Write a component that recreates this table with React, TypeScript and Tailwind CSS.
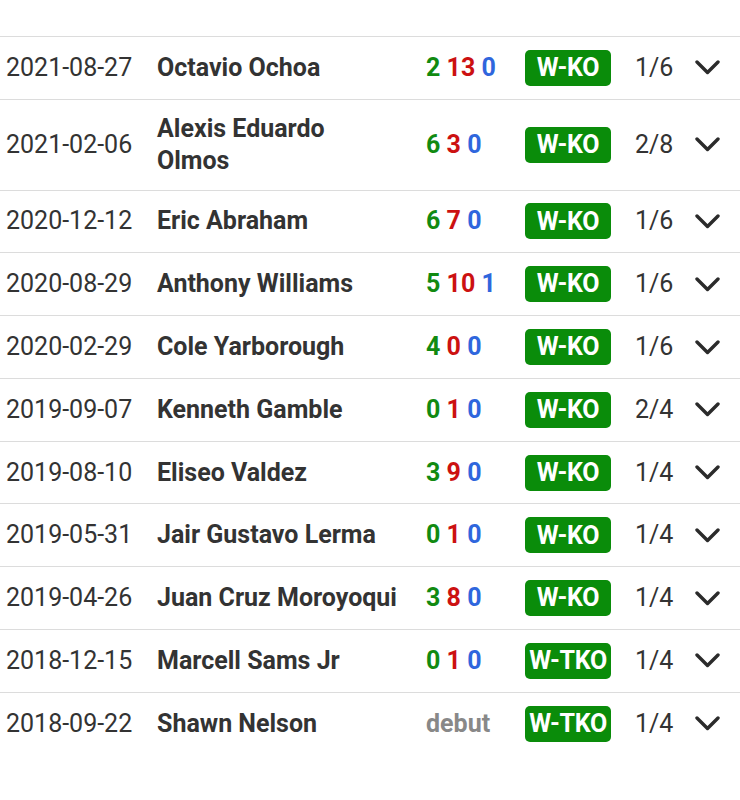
import { useState } from 'react'

type Fight = {
  date: string
  opponent: string
  record: [number, number, number] | null
  result: string
  round: string
}

const FIGHTS: Fight[] = [
  { date: '2021-08-27', opponent: 'Octavio Ochoa', record: [2, 13, 0], result: 'W-KO', round: '1/6' },
  { date: '2021-02-06', opponent: 'Alexis Eduardo Olmos', record: [6, 3, 0], result: 'W-KO', round: '2/8' },
  { date: '2020-12-12', opponent: 'Eric Abraham', record: [6, 7, 0], result: 'W-KO', round: '1/6' },
  { date: '2020-08-29', opponent: 'Anthony Williams', record: [5, 10, 1], result: 'W-KO', round: '1/6' },
  { date: '2020-02-29', opponent: 'Cole Yarborough', record: [4, 0, 0], result: 'W-KO', round: '1/6' },
  { date: '2019-09-07', opponent: 'Kenneth Gamble', record: [0, 1, 0], result: 'W-KO', round: '2/4' },
  { date: '2019-08-10', opponent: 'Eliseo Valdez', record: [3, 9, 0], result: 'W-KO', round: '1/4' },
  { date: '2019-05-31', opponent: 'Jair Gustavo Lerma', record: [0, 1, 0], result: 'W-KO', round: '1/4' },
  { date: '2019-04-26', opponent: 'Juan Cruz Moroyoqui', record: [3, 8, 0], result: 'W-KO', round: '1/4' },
  { date: '2018-12-15', opponent: 'Marcell Sams Jr', record: [0, 1, 0], result: 'W-TKO', round: '1/4' },
  { date: '2018-09-22', opponent: 'Shawn Nelson', record: null, result: 'W-TKO', round: '1/4' },
]

function Chevron() {
  return (
    <svg width="25" height="15" viewBox="0 0 25 15" fill="none">
      <polyline points="2,2 12.5,12.5 23,2" stroke="#2b2b2b" strokeWidth="3.4" strokeLinecap="round" strokeLinejoin="round" />
    </svg>
  )
}

function FightRow({ fight }: { fight: Fight }) {
  const [open, setOpen] = useState(false)
  return (
    <div
      onClick={() => setOpen(!open)}
      className="grid grid-cols-[151px_269px_99px_110px_60px_25px] items-center pl-[6px] py-[12.9px] border-t border-[#dcdcdc] cursor-pointer"
    >
      <div className="text-[25px] leading-[32px] text-[#333]">{fight.date}</div>
      <div className="max-w-[244px] text-[25px] leading-[32px] font-bold text-[#333]">{fight.opponent}</div>
      <div className="text-[25px] leading-[32px] font-bold">
        {fight.record ? (
          <>
            <span className="text-[#118a11]">{fight.record[0]}</span>{' '}
            <span className="text-[#cc1111]">{fight.record[1]}</span>{' '}
            <span className="text-[#2f66dd]">{fight.record[2]}</span>
          </>
        ) : (
          <span className="text-[#888]">debut</span>
        )}
      </div>
      <div>
        <span className="flex items-center justify-center w-[86px] h-[36px] rounded-[5px] bg-[#0a8c0a] text-white text-[25px] font-bold tracking-[-0.3px]">
          {fight.result}
        </span>
      </div>
      <div className="text-[25px] leading-[32px] text-[#333]">{fight.round}</div>
      <div className="flex items-center">
        <Chevron />
      </div>
    </div>
  )
}

export default function App() {
  return (
    <div className="w-[740px] h-[800px] bg-white pt-[36px]" style={{ fontFamily: 'Roboto, "Noto Sans", sans-serif' }}>
      {FIGHTS.map((f) => (
        <FightRow key={f.date} fight={f} />
      ))}
    </div>
  )
}
